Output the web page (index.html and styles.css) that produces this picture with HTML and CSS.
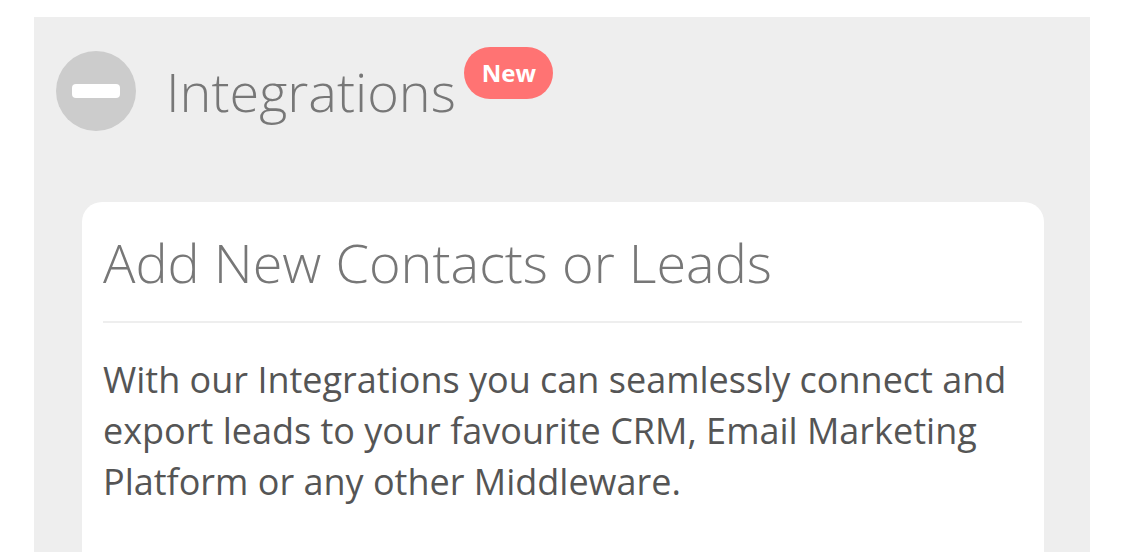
FILE: index.html
```html
<!DOCTYPE html>
<html lang="en">
<head>
  <meta charset="UTF-8">
  <meta name="viewport" content="width=device-width, initial-scale=1.0">
  <title>Integrations</title>
  <link rel="stylesheet" href="styles.css">
</head>
<body>
  <div class="panel">
    <div class="panel-header">
      <div class="toggle-icon"><span class="toggle-bar"></span></div>
      <h2 class="panel-title">Integrations</h2>
      <span class="badge-new">New</span>
    </div>
    <div class="info-card">
      <h3>Add New Contacts or Leads</h3>
      <p>With our Integrations you can seamlessly connect and export leads to your favourite CRM, Email Marketing Platform or any other Middleware.</p>
    </div>
  </div>
</body>
</html>
```

FILE: styles.css
```css
body {
  margin: 0;
  padding: 17px 0 0 34px;
  background: #fff;
  font-family: 'Open Sans', 'Liberation Sans', sans-serif;
  overflow: hidden;
}
.panel {
  width: 1056px;
  box-sizing: border-box;
  background-color: #eee;
  padding: 34px 46px 0 22px;
  min-height: 560px;
}
.panel-header {
  display: flex;
  align-items: center;
  height: 80px;
}
.toggle-icon {
  width: 80px;
  height: 80px;
  border-radius: 50%;
  background-color: #ccc;
  display: flex;
  align-items: center;
  justify-content: center;
  flex-shrink: 0;
}
.toggle-bar {
  width: 48px;
  height: 14px;
  background: #fff;
  border-radius: 4px;
}
.panel-title {
  margin: 0 0 0 30px;
  font-size: 54px;
  font-weight: 300;
  color: #777;
  line-height: 74px;
}
.badge-new {
  align-self: flex-start;
  margin: -4px 0 0 8px;
  height: 52px;
  padding: 0 17px 0 18px;
  display: flex;
  align-items: center;
  background-color: #ff7373;
  color: #fff;
  font-size: 24px;
  font-weight: 700;
  border-radius: 26px;
  line-height: 1;
}
.info-card {
  background: #fff;
  margin: 71px 0 0 26px;
  padding: 21px 22px 80px 21px;
  border-radius: 20px;
}
.info-card h3 {
  margin: 0;
  font-size: 54px;
  font-weight: 300;
  color: #777;
  line-height: 78px;
  padding-bottom: 20px;
  border-bottom: 2px solid #eee;
}
.info-card p {
  margin: 31px 0 0 0;
  font-size: 36px;
  line-height: 51px;
  color: #555;
}
```
